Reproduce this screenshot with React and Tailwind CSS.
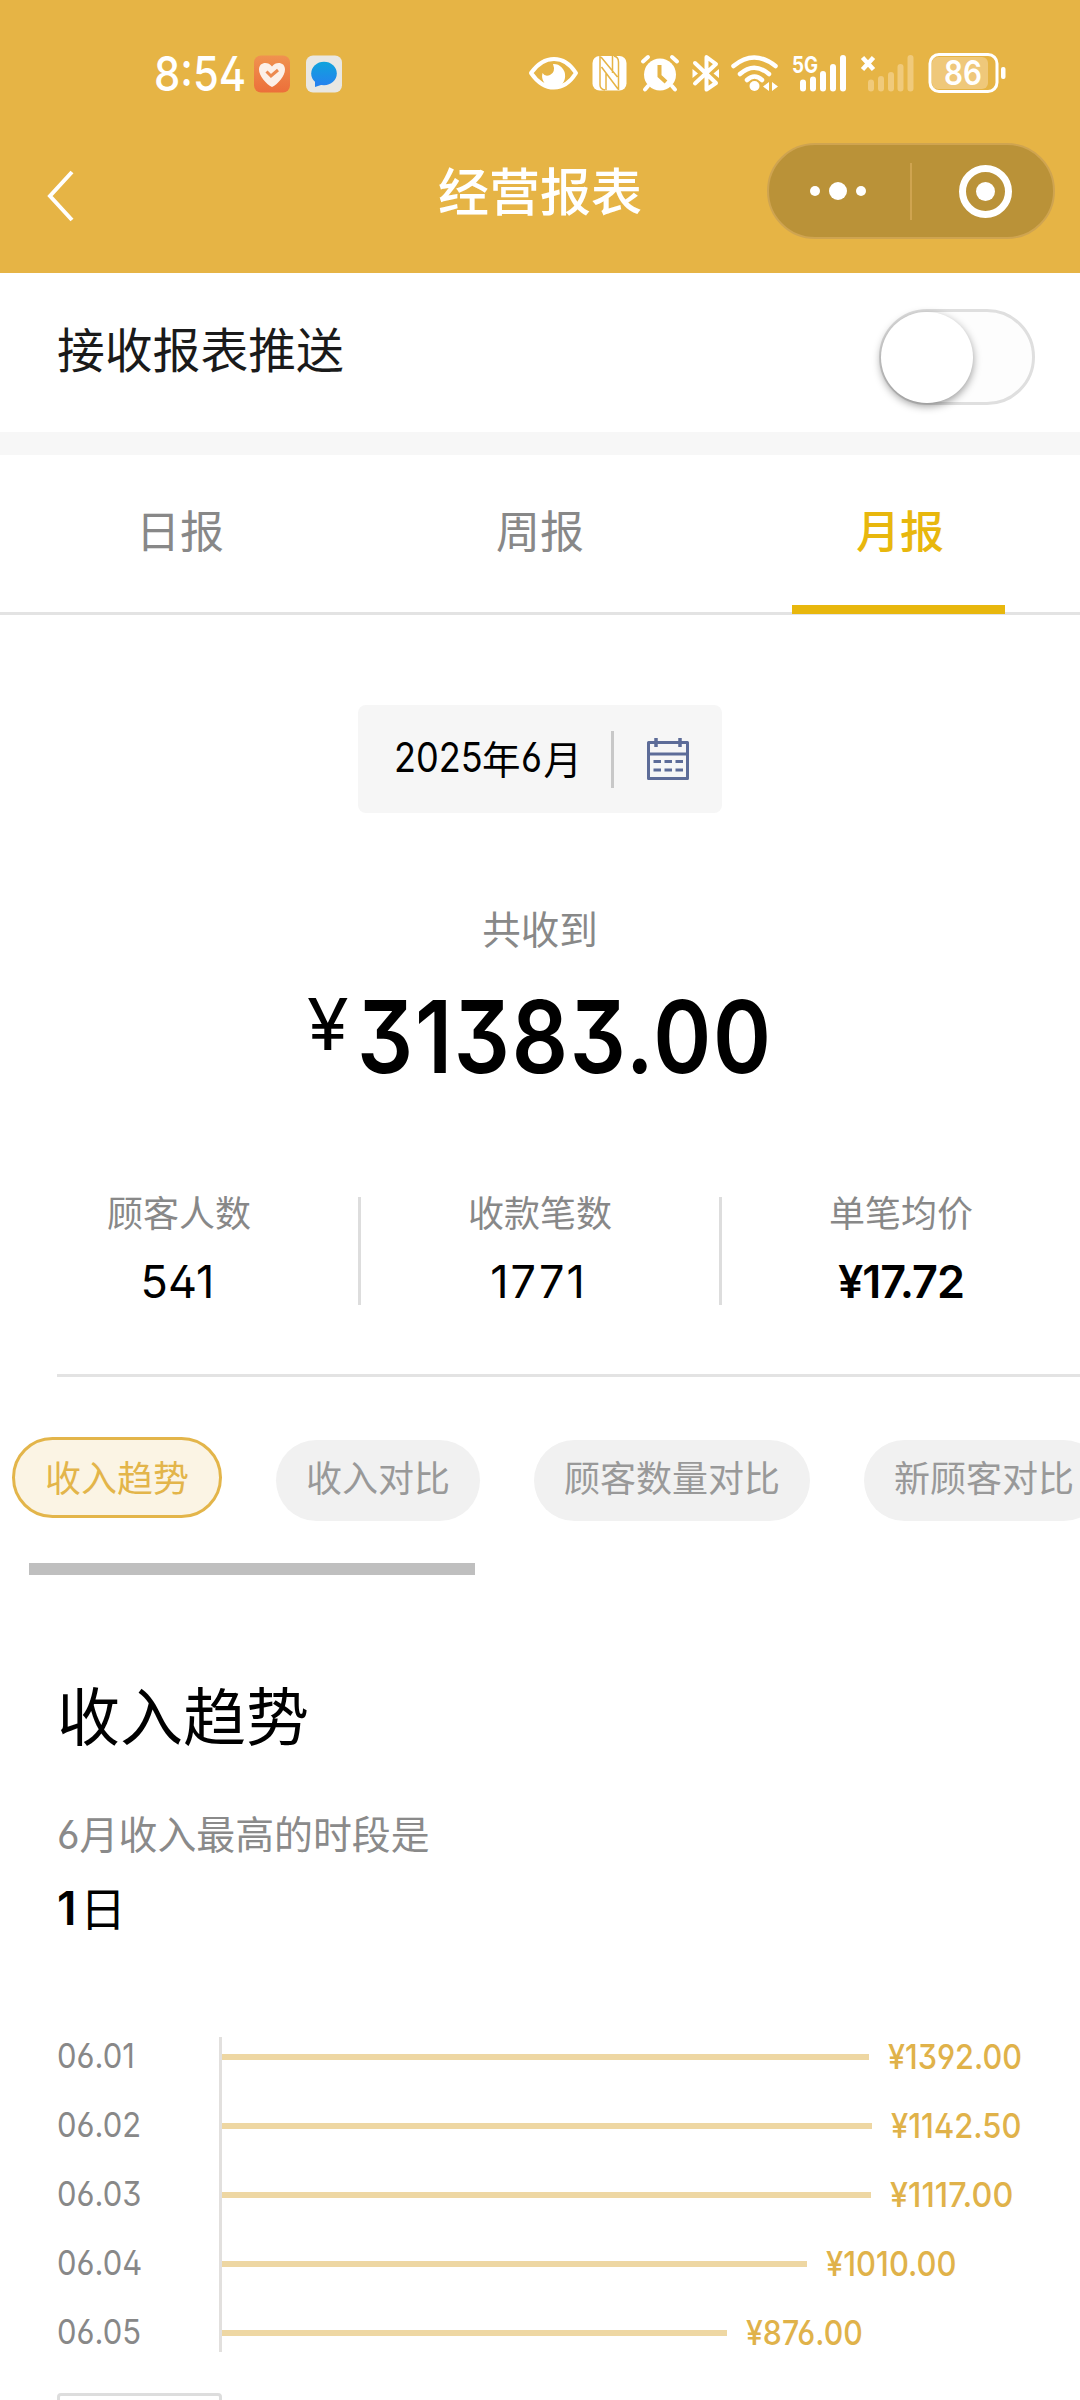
import React from 'react';

const NUM = "font-['Inter','Noto_Sans_CJK_SC',sans-serif] [font-feature-settings:'ss01','cv09']";

const tabs = ['日报', '周报', '月报'];

const stats = [
  { label: '顾客人数', value: '541', cls: 'mr-[3px]' },
  { label: '收款笔数', value: '1771', cls: 'mr-[3px] tracking-[2px]' },
  { label: '单笔均价', value: '¥17.72', cls: 'font-semibold tracking-[-1px]' },
];

const pills = [
  { label: '收入对比', cls: 'w-[204px]' },
  { label: '顾客数量对比', cls: 'w-[276px]' },
  { label: '新顾客对比', cls: 'w-[240px]' },
];

const days = [
  { date: '06.01', amount: '¥1392.00', bar: 647, cls: 'scale-x-[0.9]' },
  { date: '06.02', amount: '¥1142.50', bar: 650, cls: 'scale-x-[0.91]' },
  { date: '06.03', amount: '¥1117.00', bar: 649, cls: 'scale-x-[0.95]' },
  { date: '06.04', amount: '¥1010.00', bar: 585, cls: 'scale-x-[0.91]' },
  { date: '06.05', amount: '¥876.00', bar: 505, cls: 'scale-x-[0.89]' },
];

function AppIcons() {
  return (
    <svg width="90" height="38" viewBox="254 55 90 38" fill="none" className="mt-[7px] shrink-0">
      <defs>
        <linearGradient id="heartBg" x1="0" y1="0" x2="0" y2="1">
          <stop offset="0" stopColor="#f0924f" />
          <stop offset="1" stopColor="#ec6f3a" />
        </linearGradient>
        <linearGradient id="chatBg" x1="0" y1="0" x2="0" y2="1">
          <stop offset="0" stopColor="#0fa3dc" />
          <stop offset="1" stopColor="#2583ee" />
        </linearGradient>
      </defs>
      <rect x="254" y="55.500" width="36" height="37" rx="7" fill="url(#heartBg)" />
      <path d="M272 87 C266 84 259 76 259 69.500 C259 62 268 61 272 66.500 C276 61 285 62 285 69.500 C285 76 278 84 272 87Z" fill="#fcf0e8" />
      <path d="M266.500 71.500 L271 76 L278 70" stroke="#ec8a50" strokeWidth="3" />
      <rect x="306" y="55.500" width="36" height="37" rx="7" fill="#e9e7e2" />
      <ellipse cx="324" cy="73.500" rx="12.800" ry="11.800" fill="url(#chatBg)" />
      <path d="M315 80 L315 87 L324 84Z" fill="#2583ee" />
    </svg>
  );
}

function StatusIcons() {
  return (
    <svg width="484" height="50" viewBox="526 50 484 50" fill="none" className="ml-[182px] mt-[2px] shrink-0">
      {/* eye */}
      <path d="M531 73 Q541 59 554 59 Q567 59 576 73 Q567 87.500 554 87.500 Q541 87.500 531 73Z" stroke="#fff" strokeWidth="4" strokeLinejoin="round" />
      <path d="M542.500 73 A11.500 12 0 1 0 553 64 Q556 72 550 75 Q545 77 542.500 73Z" fill="#fff" />
      {/* nfc */}
      <rect x="592.500" y="56" width="34" height="34.500" rx="7" fill="#fff" />
      <path d="M600 56 V85 Q600 89 605 90 M618.500 90 V62 Q618.500 57 614 56 M601 57 L617.500 77 M601.500 67 L618 89 M606 73 V90 M612.500 56 V73" stroke="#e6b445" strokeWidth="1.500" />
      {/* alarm */}
      <ellipse cx="660" cy="74.500" rx="16" ry="16" fill="#fff" />
      <path d="M659.500 65 V76 L666 82" stroke="#e6b445" strokeWidth="4" />
      <path d="M643 61.500 L648 57 M677 61.500 L672 57 M648 86 L645 89.500 M672 86 L675 89.500" stroke="#fff" strokeWidth="4" strokeLinecap="round" />
      {/* bluetooth */}
      <path d="M695 63 L716 83 L706.500 89.500 V57 L716 64 L695 83.500" stroke="#fff" strokeWidth="4" strokeLinejoin="round" strokeLinecap="round" />
      <path d="M692.500 69 L698 73.500 L692.500 78Z M719 69 L713.500 73.500 L719 78Z" fill="#fff" />
      {/* wifi */}
      <path d="M733.500 66 Q754 49 775.500 66 M740 74 Q754 61.500 769 74 M747 80 Q754.500 73 762 80" stroke="#fff" strokeWidth="4.500" strokeLinecap="round" />
      <circle cx="754.500" cy="86" r="5" fill="#fff" />
      <path d="M769 82 V91 L763 86.500Z M772 82 V91 L778 86.500Z" fill="#fff" />
      {/* sim 1 */}
      <text x="792" y="73" fill="#fff" fontSize="23" fontWeight="700" textLength="26" lengthAdjust="spacingAndGlyphs" fontFamily="Inter, sans-serif">5G</text>
      <path d="M803 82.500 V88.500 M813 79.500 V88.500 M823 74 V88.500 M833 67 V88.500 M843 58 V88.500" stroke="#fff" strokeWidth="6" strokeLinecap="round" />
      {/* sim 2 */}
      <path d="M862.500 57.500 L873.500 69.500 M873.500 57.500 L862.500 69.500" stroke="#fff" strokeWidth="4.500" />
      <path d="M871 82.500 V88.500 M881 79 V88.500 M891 75 V88.500 M900.500 67 V88.500 M910.500 58 V88.500" stroke="#f0ca7b" strokeWidth="6" strokeLinecap="round" />
      {/* battery */}
      <rect x="932" y="57" width="56" height="32" rx="6" fill="#efc87a" />
      <rect x="930" y="54.500" width="67" height="37" rx="9" stroke="#fff" strokeWidth="3" />
      <rect x="1001" y="67" width="4.500" height="12" rx="2" fill="#fff" />
      <text x="944" y="85" fill="#fff" fontSize="34" fontWeight="600" textLength="38" lengthAdjust="spacingAndGlyphs" fontFamily="Inter, sans-serif">86</text>
    </svg>
  );
}

function StatusBar() {
  return (
    <div className="flex h-[143px] pt-[48px]">
      <span className={`ml-[154px] h-[50px] w-[100px] shrink-0 origin-left scale-x-[0.87] text-[48px] font-medium leading-[51px] text-white ${NUM}`}>8:54</span>
      <AppIcons />
      <StatusIcons />
    </div>
  );
}

function NavBar() {
  return (
    <div className="flex h-24 items-center">
      <svg width="30" height="54" viewBox="0 0 30 54" fill="none" className="ml-[46px] mt-[10px]">
        <path d="M26 3 L4 27 L26 51" stroke="#fff" strokeWidth="4" />
      </svg>
      <h1 className="mb-[3px] ml-[362px] w-[210px] text-[51px] font-medium leading-none text-white">经营报表</h1>
      <div className="ml-[119px] flex h-24 w-[288px] items-center rounded-full border-2 border-[#cfa450] bg-[#ba9238]">
        <svg width="284" height="92" viewBox="0 0 284 92" fill="none">
          <circle cx="46" cy="46" r="5" fill="#fff" />
          <circle cx="69" cy="46" r="9" fill="#fff" />
          <circle cx="92" cy="46" r="5" fill="#fff" />
          <path d="M142 18 V75" stroke="#cfa450" strokeWidth="2" />
          <circle cx="216.500" cy="46.500" r="23" stroke="#fff" strokeWidth="7" />
          <circle cx="216.500" cy="46.500" r="9.500" fill="#fff" />
        </svg>
      </div>
    </div>
  );
}

function PushSwitch() {
  return (
    <div className="flex h-[159px] items-start bg-white pl-[57px] pr-[45px]">
      <span className="mt-[45px] flex-1 text-[47.800px] leading-[60px] text-[#1a1a1a]">接收报表推送</span>
      <div className="mt-9 h-24 w-[156px] rounded-full border-[3px] border-[#dfdfdf] bg-[#fdfdfd]">
        <div className="-ml-px h-[91px] w-[92px] rounded-full bg-white shadow-[0_3px_8px_rgba(0,0,0,0.4)]" />
      </div>
    </div>
  );
}

function Tabs() {
  return (
    <div className="flex h-[160px] border-b-[3px] border-[#e3e3e3]">
      {tabs.map((tab, i) => (
        <div key={tab} className="flex flex-1 flex-col items-center">
          <span className={i === 2 ? 'mt-[44px] text-[44px] font-medium leading-[60px] text-[#e8b70d]' : 'mt-[44px] text-[44px] leading-[60px] text-[#888]'}>
            {tab}
          </span>
          {i === 2 && <div className="mr-[3px] mt-[46px] h-[9px] w-[213px] shrink-0 bg-[#e8b70d]" />}
        </div>
      ))}
    </div>
  );
}

function DatePicker() {
  return (
    <div className="ml-[358px] mt-[90px] flex h-[108px] w-[364px] items-center rounded-lg bg-[#f6f6f6]">
      <div className="mb-1 ml-[36px] flex w-[217px] text-[38.500px] leading-[60px] text-black">
        <span className={`w-[88px] origin-left scale-x-[0.88] text-[41px] ${NUM}`}>2025</span>
        <span>年</span>
        <span className={`w-[23px] origin-left scale-x-[0.88] text-[41px] ${NUM}`}>6</span>
        <span>月</span>
      </div>
      <div className="h-[57px] w-[3px] bg-[#c8c8c8]" />
      <svg width="44" height="44" viewBox="0 0 44 44" fill="none" stroke="#5d6c98" className="ml-[32px]">
        <path d="M2.500 5.500 H41.500 V41.500 H2.500Z" strokeWidth="3" strokeLinejoin="round" />
        <path d="M2 17 H42" strokeWidth="3" />
        <path d="M10 1 V10 M34 1 V10" strokeWidth="3.500" />
        <path d="M7.500 24.500 H15 M18.500 24.500 H26 M29.500 24.500 H37 M7.500 33 H15 M18.500 33 H26 M29.500 33 H37" strokeWidth="3" />
      </svg>
    </div>
  );
}

function Total() {
  return (
    <div className="flex flex-col items-center">
      <span className="mt-[84px] text-[38.500px] leading-[60px] text-[#888]">共收到</span>
      <div className={`mt-5 flex h-[120px] w-full pl-[307px] text-black ${NUM}`}>
        <span className="w-[50px] origin-left scale-x-[1.05] text-[72px] leading-[93px]">¥</span>
        <span className="origin-left scale-x-[0.88] text-[100px] font-semibold leading-[120px] tracking-[2px]">31383.00</span>
      </div>
    </div>
  );
}

function Stats() {
  return (
    <div className="mt-[100px] flex h-[108px]">
      {stats.map((s, i) => (
        <div key={s.label} className={i < 2 ? 'flex flex-1 flex-col items-center border-r-[3px] border-[#ddd]' : 'flex flex-1 flex-col items-center'}>
          <span className="-mt-[11px] text-[36px] leading-[50px] text-[#888]">{s.label}</span>
          <span className={`mt-[21px] text-[45px] leading-[50px] text-black ${s.cls} ${NUM}`}>{s.value}</span>
        </div>
      ))}
    </div>
  );
}

function Pills() {
  return (
    <div className="mt-[60px] flex gap-[54px] overflow-hidden pl-3 text-[36px] leading-[50px]">
      <div className="h-[81px] w-[210px] shrink-0 rounded-full border-[3px] border-[#e3b54a] bg-[#fbf4e4] pt-[11px] text-center text-[#e3b54a]">
        收入趋势
      </div>
      {pills.map((p) => (
        <div key={p.label} className={`mt-[3px] h-[81px] shrink-0 rounded-full bg-[#f1f1f1] pt-[11px] text-center text-[#999] ${p.cls}`}>
          {p.label}
        </div>
      ))}
    </div>
  );
}

function Trend() {
  return (
    <div className="px-[57px]">
      <h2 className="mt-[98px] text-[63px] leading-[80px] text-black">收入趋势</h2>
      <p className={`mt-[52px] text-[38.900px] leading-[60px] text-[#8a8a8a] ${NUM}`}>6月收入最高的时段是</p>
      <p className="mt-[13px] flex h-[60px] text-[46px] text-black">
        <span className={`w-[23px] font-semibold leading-[60px] ${NUM}`}>1</span>
        <span className="leading-[56px]">日</span>
      </p>
      <div className="mt-[99px] flex">
        <div className="flex w-[162px] shrink-0 flex-col gap-[30px]">
          {days.map((d) => (
            <span key={d.date} className={`h-[39px] origin-left scale-x-[0.91] text-[34px] leading-[37px] text-[#888] ${NUM}`}>{d.date}</span>
          ))}
        </div>
        <div className="flex shrink-0 flex-col gap-[30px] border-l-[3px] border-[#e2e0de]">
          {days.map((d) => (
            <div key={d.date} className="flex h-[39px] items-center">
              <div className="h-[6px] shrink-0 bg-[#eed7a3]" style={{ width: d.bar }} />
              <span className={`ml-[19px] origin-left text-[34px] font-medium leading-[39px] text-[#e0b24a] ${d.cls} ${NUM}`}>{d.amount}</span>
            </div>
          ))}
        </div>
      </div>
      <div className="mt-[41px] h-[60px] w-[165px] rounded border-[3px] border-[#ddd]" />
    </div>
  );
}

export default function App() {
  return (
    <div className="h-[2400px] w-[1080px] overflow-hidden bg-white font-['Noto_Sans_CJK_SC',sans-serif]">
      <header className="h-[273px] bg-[#e6b445]">
        <StatusBar />
        <NavBar />
      </header>
      <PushSwitch />
      <div className="h-[23px] bg-[#f7f7f7]" />
      <Tabs />
      <DatePicker />
      <Total />
      <Stats />
      <div className="ml-[57px] mt-[69px] h-[3px] bg-[#e3e3e3]" />
      <Pills />
      <div className="ml-[29px] mt-[42px] h-3 w-[446px] bg-[#bfbfbf]" />
      <Trend />
    </div>
  );
}
